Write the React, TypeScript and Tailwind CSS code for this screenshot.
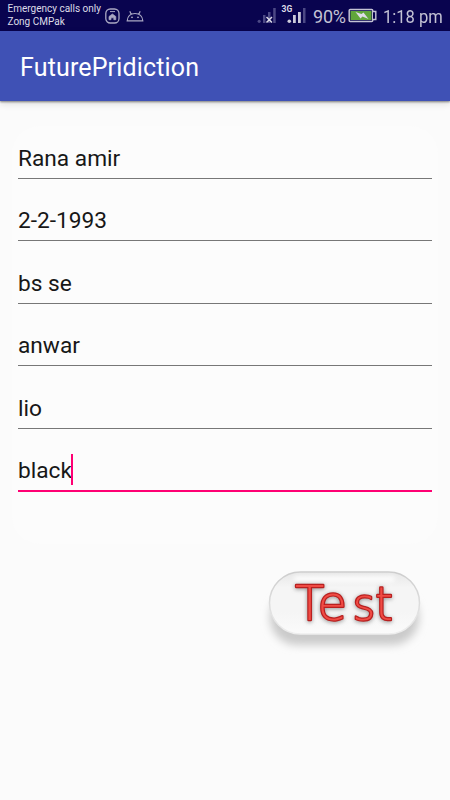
import { useState } from 'react';

const initialFields = ['Rana amir', '2-2-1993', 'bs se', 'anwar', 'lio', 'black'];

function StatusBar() {
  return (
    <header className="relative flex h-[31px] items-start bg-[#09044f] text-[#c3c2d4]">
      <div className="w-[104px] shrink-0 pl-[7.5px] pt-[2px] text-[10px] leading-[13px] text-[#dddce8] whitespace-nowrap">
        <p>Emergency calls only</p>
        <p>Zong CMPak</p>
      </div>
      <svg className="mt-[8px] h-4 w-4 shrink-0" viewBox="0 0 16 16" fill="none" stroke="#aaa8c3">
        <rect x="1.8" y="1" width="13.2" height="14" rx="4.5" strokeWidth="1.3" />
        <path d="M6 3.6h5" strokeWidth="1" />
        <path d="M5 8.5 8.4 6l3.4 2.5v3.2h-2V9.800H7v1.900H5Z" fill="#aaa8c3" strokeWidth=".7" />
      </svg>
      <svg className="ml-[6px] mt-[10px] h-3 w-[18px] shrink-0" viewBox="0 0 18 12" fill="none" stroke="#aaa8c3">
        <path d="M1.2 10.8C1.5 6.5 4.5 3.5 9 3.5s7.5 3 7.8 7.3ZM5.2 4.2 3.8 1.2M12.8 4.2l1.4-3" strokeWidth="1.2" />
        <circle cx="6" cy="7.3" r=".5" fill="#aaa8c3" />
        <circle cx="12" cy="7.3" r=".5" fill="#aaa8c3" />
      </svg>
      <svg className="absolute left-[256px] top-[4px] h-5 w-[50px]" viewBox="0 0 50 20">
        <g fill="#4c4985">
          <circle cx="3.2" cy="17.3" r="1.6" />
          <path d="M7 11h2.5v8H7zM12 8h2.5v11H12zM17.2 4h2.5v15h-2.5zM47 4h2.5v15H47z" />
        </g>
        <path d="m10.5 13 5.5 5.5m0-5.5-5.5 5.5" stroke="#dddce8" strokeWidth="1.5" />
        <g fill="#cccbda">
          <circle cx="33.3" cy="17.3" r="1.8" />
          <path d="M37 11h2.800v8H37zM42 8h2.800v11H42z" />
        </g>
        <text x="25.500" y="7.5" fill="#dddce8" fontSize="8.5" fontWeight="700">3G</text>
      </svg>
      <span className="absolute left-[313px] top-[6px] text-[18px] leading-[22px] tracking-[-0.2px]">90%</span>
      <svg className="absolute left-[348px] top-[8px] h-[15px] w-[29px]" viewBox="0 0 29 15">
        <rect x="1.2" y="1.5" width="23.5" height="12" rx="1" fill="#09044f" stroke="#c3c2d4" strokeWidth="1.5" />
        <path d="M2.5 3h21v9h-21z" fill="#60a63b" />
        <path d="M25 3.5h2.8v8H25" fill="#09044f" stroke="#c3c2d4" strokeWidth="1.4" />
        <path d="m7.5 4 6 2 2-1.5 5 6.5-6-2.5-2 2Z" fill="#dddce8" />
      </svg>
      <span className="absolute left-[383px] top-[6px] origin-left scale-x-[0.92] text-[18px] leading-[22px] whitespace-nowrap">1:18 pm</span>
    </header>
  );
}

function TestButton() {
  return (
    <button type="button" className="mr-[14px] mt-[16px] block h-[100px] w-[182px] self-end">
      <svg className="h-full w-full" viewBox="0 0 182 100">
        <defs>
          <linearGradient id="face" x1="0" y1="0" x2="0" y2="1">
            <stop offset="0" stopColor="#e7e7e7" />
            <stop offset=".25" stopColor="#f5f5f5" />
            <stop offset=".65" stopColor="#f5f5f5" />
            <stop offset="1" stopColor="#fbfbfb" />
          </linearGradient>
          <linearGradient id="rim" x1="0" y1="0" x2="0" y2="1">
            <stop offset="0" stopColor="#cdcdcd" />
            <stop offset=".6" stopColor="#dfdfdf" />
            <stop offset="1" stopColor="#eeeeee" />
          </linearGradient>
          <filter id="soft" x="-20%" y="-30%" width="140%" height="160%">
            <feGaussianBlur stdDeviation="4.5" />
          </filter>
          <filter id="glow" x="-20%" y="-100%" width="140%" height="300%">
            <feGaussianBlur stdDeviation="2" />
          </filter>
        </defs>
        <rect x="16" y="30" width="149" height="55" rx="27" fill="#cacaca" filter="url(#soft)" />
        <rect x="15.5" y="12" width="150" height="62" rx="31" fill="url(#face)" stroke="url(#rim)" strokeWidth="1.5" />
        <rect x="40" y="16" width="101" height="6" rx="3" fill="#fff" opacity=".8" filter="url(#glow)" />
        <text
          x="41 63.5 98.5 121"
          y="59.5"
          fontSize="48"
          fill="#f04b44"
          stroke="#b82020"
          strokeWidth="2.4"
          strokeLinejoin="round"
          className="font-['DejaVu_Sans',sans-serif] font-extralight [paint-order:stroke] [filter:drop-shadow(0_1px_2px_rgba(80,80,80,0.6))]"
        >
          Te<tspan fontSize="44">s</tspan><tspan fontSize="46">t</tspan>
        </text>
      </svg>
    </button>
  );
}

export default function App() {
  const [fields, setFields] = useState(initialFields);

  const updateField = (index: number, value: string) => {
    setFields(fields.map((field, i) => (i === index ? value : field)));
  };

  return (
    <main className="flex h-[800px] w-[450px] flex-col overflow-hidden bg-[#fbfbfb] font-['Roboto',sans-serif]">
      <StatusBar />
      <div className="z-10 flex h-[70px] shrink-0 items-center bg-[#3f51b5] pl-[20px] pt-[4px] text-[25px] tracking-[0.15px] text-white shadow-[0_1px_2px_rgba(0,0,0,0.45),0_3px_7px_rgba(0,0,0,0.12)]">
        <h1>FuturePridiction</h1>
      </div>
      <form className="mx-[12px] mt-[25px] h-[418px] shrink-0 rounded-[28px] bg-[#fcfcfc] px-[6px] pt-[10px]">
        {fields.map((field, index) => {
          const active = index === fields.length - 1;
          return (
            <div key={index} className="relative h-[62.4px]">
              <input
                aria-label={`Field ${index + 1}`}
                value={field}
                onChange={(e) => updateField(index, e.target.value)}
                className={`block w-full bg-transparent text-[22.7px] text-[#171717] outline-none ${
                  active ? 'h-[44px] border-b-2 border-[#ff0073] pt-[3px]' : 'h-[43px] border-b border-[#777] pt-[3px]'
                }`}
              />
              {active && <span className="absolute left-[53px] top-[6px] h-[31px] w-[2px] bg-[#ff0073]" />}
            </div>
          );
        })}
      </form>
      <TestButton />
    </main>
  );
}
